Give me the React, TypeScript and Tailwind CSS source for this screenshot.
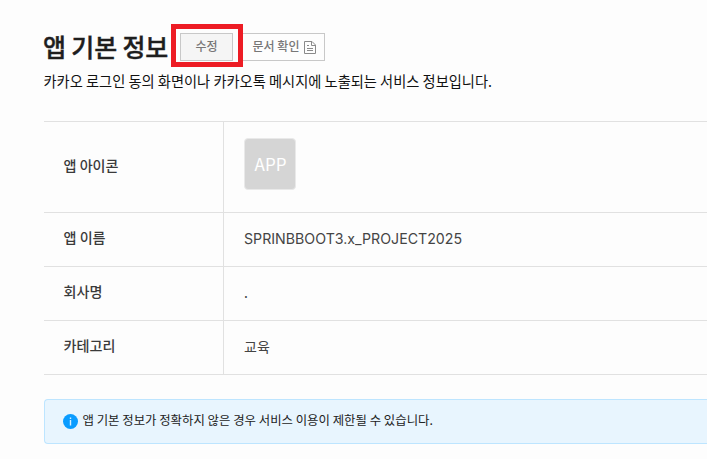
import type { ReactNode } from 'react';

function Row({ label, height, children }: { label: string; height: string; children: ReactNode }) {
  return (
    <div className={`flex border-b border-[#e1e1e1] ${height}`}>
      <div className="flex w-[180px] shrink-0 items-center border-r border-[#e1e1e1] pb-[3px] pl-[19.5px] text-[14.1px] font-medium text-[#3a3a3a]">
        <span>{label}</span>
      </div>
      <div className="flex flex-1 items-center pb-[2px] pl-5 text-[15px] text-[#444]">{children}</div>
    </div>
  );
}

function DocIcon() {
  return (
    <svg width="12" height="13" viewBox="0 0 12 13" fill="none" stroke="#8a8a8a">
      <path d="M.5.5H8L11.5 4V12.5H.5ZM7.5.5V4.5H11.5M3 4.5H5M3 7.5H9M3 9.5H9" />
    </svg>
  );
}

export default function App() {
  return (
    <div className="h-[459px] w-[707px] overflow-hidden bg-[#fdfdfd] pl-11 pt-6 font-['Noto_Sans_CJK_KR',sans-serif]">
      <header className="flex h-[43px]">
        <h1 className="-ml-px w-[128px] whitespace-nowrap pt-[4px] text-[25px] font-medium leading-[36px] tracking-[-0.15px] text-[#1e1e1e] [-webkit-text-stroke:0.4px_#1e1e1e]">앱 기본 정보</h1>
        <div className="h-[43px] w-[72px] border-[5px] border-[#ed1c24] pl-1 pt-1">
          <button className="block h-7 w-[53px] border border-[#c8c8c8] bg-[#f5f5f5] text-[12px] font-medium leading-[23px] text-[#777]">
            <span className="block pb-[3px]">수정</span>
          </button>
        </div>
        <button className="mt-[9px] flex h-7 w-[82px] items-center gap-1 border border-l-0 border-[#c8c8c8] pl-[9px] text-[12px] font-medium text-[#777]">
          <span className="w-[48px] whitespace-nowrap pb-[2px] leading-[22px]">문서 확인</span>
          <DocIcon />
        </button>
      </header>
      <p className="-ml-[0.5px] mt-[3px] whitespace-nowrap text-[14.24px] leading-[22px] text-[#111]">
        카카오 로그인 동의 화면이나 카카오톡 메시지에 노출되는 서비스 정보입니다.
      </p>
      <section className="mt-[29px] border-t border-[#e1e1e1]">
        <Row label="앱 아이콘" height="h-[91px]">
          <div className="mb-[4px] flex size-[52px] items-center justify-center rounded-[4px] border border-[#e9e9e9] bg-[#d5d5d5] pb-px pl-px text-[17px] text-white">APP</div>
        </Row>
        <Row label="앱 이름" height="h-[54px]">
          <span className="font-['Inter'] text-[14.2px]">SPRINBBOOT3.x_PROJECT2025</span>
        </Row>
        <Row label="회사명" height="h-[54px]"><span className="text-[14px]">.</span></Row>
        <Row label="카테고리" height="h-[54px]"><span className="text-[14px]">교육</span></Row>
      </section>
      <aside className="mt-6 flex h-[45px] items-center rounded-l-[4px] border border-r-0 border-[#bde5ff] bg-[#e8f5fe] pl-[17.5px] text-[12.4px] text-[#222]">
        <svg width="15" height="15" viewBox="0 0 15 15" className="mr-[5px]">
          <circle cx="7.5" cy="7.5" r="7.5" fill="#0a9cff" />
          <path d="M7.5 3.5V5M7.5 6V11.5" stroke="#d9f0ff" strokeWidth="1.4" />
        </svg>
        <span className="pb-[3px]">앱 기본 정보가 정확하지 않은 경우 서비스 이용이 제한될 수 있습니다.</span>
      </aside>
    </div>
  );
}
